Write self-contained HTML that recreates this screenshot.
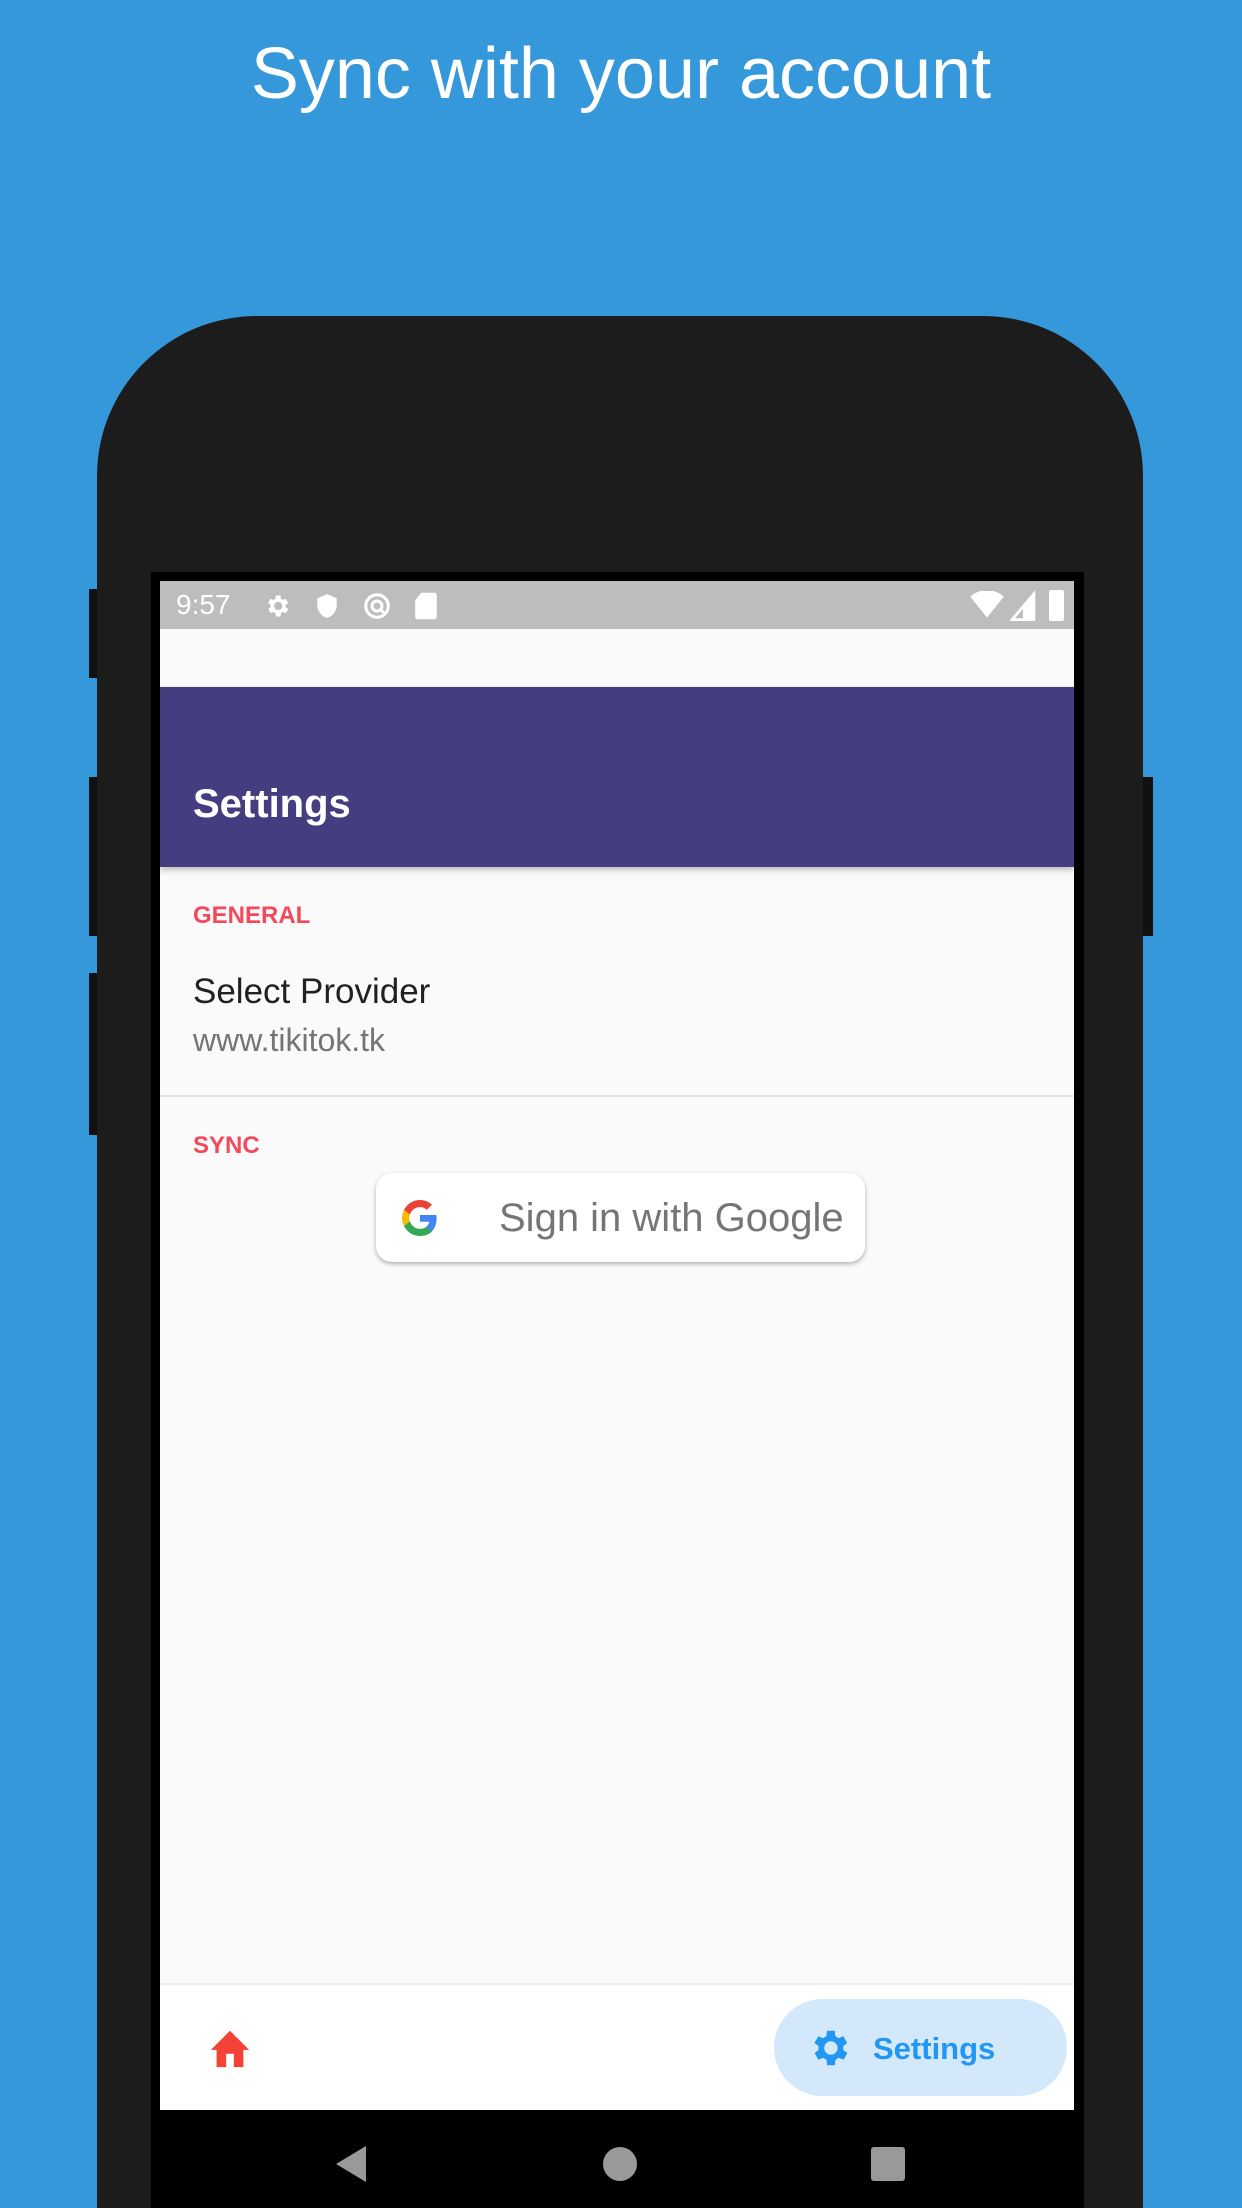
<!DOCTYPE html>
<html><head><meta charset="utf-8"><style>
*{margin:0;padding:0;box-sizing:border-box}
html,body{width:1242px;height:2208px;overflow:hidden}
body{background:#3598db;position:relative;font-family:"Liberation Sans",sans-serif}
.abs{position:absolute;line-height:1}
</style></head><body>
<div class="abs" style="left:0;top:36px;width:1242px;text-align:center;color:#fff;font-size:72px;line-height:76px">Sync with your account</div>
<div class="abs" style="left:89px;top:589px;width:10px;height:89px;background:#111"></div>
<div class="abs" style="left:89px;top:777px;width:10px;height:159px;background:#111"></div>
<div class="abs" style="left:89px;top:973px;width:10px;height:162px;background:#111"></div>
<div class="abs" style="left:1140px;top:777px;width:13px;height:159px;background:#111"></div>
<div class="abs" style="left:97px;top:316px;width:1046px;height:1892px;background:#1c1c1c;border-radius:160px 160px 0 0"></div>
<div class="abs" style="left:151px;top:572px;width:933px;height:1636px;background:#000"></div>
<div class="abs" style="left:160px;top:581px;width:914px;height:1529px;background:#fafafa;overflow:hidden">
  <div class="abs" style="left:0;top:0;width:914px;height:48px;background:#bdbdbd"></div>
  <div class="abs" style="left:16px;top:10px;color:#fff;font-size:28px">9:57</div>
  <svg class="abs" style="left:103px;top:11px" width="28" height="28" viewBox="0 0 24 24"><path fill="#fff" d="M19.4 13a7.6 7.6 0 000-2l2.1-1.6-2-3.5-2.5 1a7 7 0 00-1.7-1L15 3h-4l-.4 2.9a7 7 0 00-1.7 1l-2.5-1-2 3.5L6.6 11a7.6 7.6 0 000 2l-2.1 1.6 2 3.5 2.5-1a7 7 0 001.7 1L11 21h4l.4-2.9a7 7 0 001.7-1l2.5 1 2-3.5zM13 15.5a3.5 3.5 0 110-7 3.5 3.5 0 010 7z"/></svg>
  <svg class="abs" style="left:154px;top:11px" width="26" height="28" viewBox="0 0 24 24"><path fill="#fff" d="M12 1L3 5v6c0 5.5 3.8 10.7 9 12 5.2-1.3 9-6.5 9-12V5z"/></svg>
  <svg class="abs" style="left:202px;top:10px" width="30" height="30" viewBox="0 0 24 24"><circle cx="12" cy="12" r="9" fill="none" stroke="#fff" stroke-width="2.5"/><circle cx="12" cy="12" r="4" fill="none" stroke="#fff" stroke-width="2.5"/><path d="M14 14l5 5" stroke="#fff" stroke-width="2.5"/></svg>
  <svg class="abs" style="left:254px;top:10px" width="24" height="30" viewBox="0 0 20 24"><path fill="#fff" d="M6 1h11a2 2 0 012 2v18a2 2 0 01-2 2H3a2 2 0 01-2-2V7z"/></svg>
  <svg class="abs" style="left:810px;top:10px" width="34" height="28" viewBox="0 0 24 20"><path fill="#fff" d="M0 4a18 18 0 0124 0L12 19z"/></svg>
  <svg class="abs" style="left:849px;top:10px" width="28" height="30" viewBox="0 0 20 22"><path fill="none" stroke="#fff" stroke-width="2" d="M18 2v19H2z"/><path fill="#fff" d="M18 2v19h-8v-11z"/></svg>
  <div class="abs" style="left:889px;top:9px;width:15px;height:31px;background:#fff;border-radius:2px"></div>
  <div class="abs" style="left:0;top:106px;width:914px;height:180px;background:#443d80;box-shadow:0 3px 6px rgba(0,0,0,.25)"></div>
  <div class="abs" style="left:33px;top:203px;color:#fff;font-size:40px;font-weight:bold">Settings</div>
  <div class="abs" style="left:33px;top:323px;color:#f5485b;font-size:24px;font-weight:bold">GENERAL</div>
  <div class="abs" style="left:33px;top:393px;color:#212121;font-size:35px">Select Provider</div>
  <div class="abs" style="left:33px;top:443px;color:#757575;font-size:32px">www.tikitok.tk</div>
  <div class="abs" style="left:0;top:514px;width:914px;height:2px;background:#e6e6e6"></div>
  <div class="abs" style="left:33px;top:553px;color:#f5485b;font-size:24px;font-weight:bold">SYNC</div>
  <div class="abs" style="left:216px;top:592px;width:489px;height:89px;background:#fff;border-radius:16px;box-shadow:0 2px 5px rgba(0,0,0,.3)"></div>
  <svg class="abs" style="left:242px;top:619px" width="36" height="36" viewBox="0 0 48 48"><path fill="#EA4335" d="M24 9.5c3.5 0 6.6 1.2 9.1 3.6l6.8-6.8C35.8 2.4 30.3 0 24 0 14.6 0 6.6 5.4 2.6 13.3l7.9 6.2C12.4 13.7 17.7 9.5 24 9.5z"/><path fill="#4285F4" d="M46.1 24.5c0-1.6-.1-3.1-.4-4.5H24v9h12.4c-.5 2.9-2.2 5.3-4.6 7l7.7 6c4.5-4.2 6.6-10.3 6.6-17.5z"/><path fill="#FBBC05" d="M10.5 28.6a14.5 14.5 0 010-9.1l-7.9-6.2a24 24 0 000 21.5z"/><path fill="#34A853" d="M24 48c6.5 0 11.9-2.1 15.9-5.8l-7.7-6c-2.2 1.5-5 2.3-8.2 2.3-6.3 0-11.6-4.2-13.5-10l-7.9 6.2C6.6 42.6 14.6 48 24 48z"/></svg>
  <div class="abs" style="left:339px;top:617px;color:#757575;font-size:40px">Sign in with Google</div>
  <div class="abs" style="left:0;top:1402px;width:914px;height:127px;background:#fff;border-top:2px solid #eee"></div>
  <svg class="abs" style="left:47px;top:1445px" width="46" height="44" viewBox="0 0 24 22"><path fill="#f44336" d="M10 21v-7h4v7h5v-9h3L12 2 2 12h3v9z"/></svg>
  <div class="abs" style="left:614px;top:1418px;width:293px;height:97px;background:#d3e8fb;border-radius:49px"></div>
  <svg class="abs" style="left:646px;top:1444px" width="46" height="46" viewBox="0 0 24 24"><path fill="#2196f3" d="M19.4 13a7.6 7.6 0 000-2l2.1-1.6-2-3.5-2.5 1a7 7 0 00-1.7-1L15 3h-4l-.4 2.9a7 7 0 00-1.7 1l-2.5-1-2 3.5L6.6 11a7.6 7.6 0 000 2l-2.1 1.6 2 3.5 2.5-1a7 7 0 001.7 1L11 21h4l.4-2.9a7 7 0 001.7-1l2.5 1 2-3.5zM13 15.5a3.5 3.5 0 110-7 3.5 3.5 0 010 7z"/></svg>
  <div class="abs" style="left:713px;top:1452px;color:#2196f3;font-size:31px;font-weight:bold">Settings</div>
</div>
<svg class="abs" style="left:334px;top:2145px" width="34" height="38" viewBox="0 0 34 38"><path fill="#999" d="M32 1v36L2 19z"/></svg>
<div class="abs" style="left:603px;top:2147px;width:34px;height:34px;border-radius:50%;background:#999"></div>
<div class="abs" style="left:871px;top:2147px;width:34px;height:34px;border-radius:3px;background:#999"></div>
</body></html>
